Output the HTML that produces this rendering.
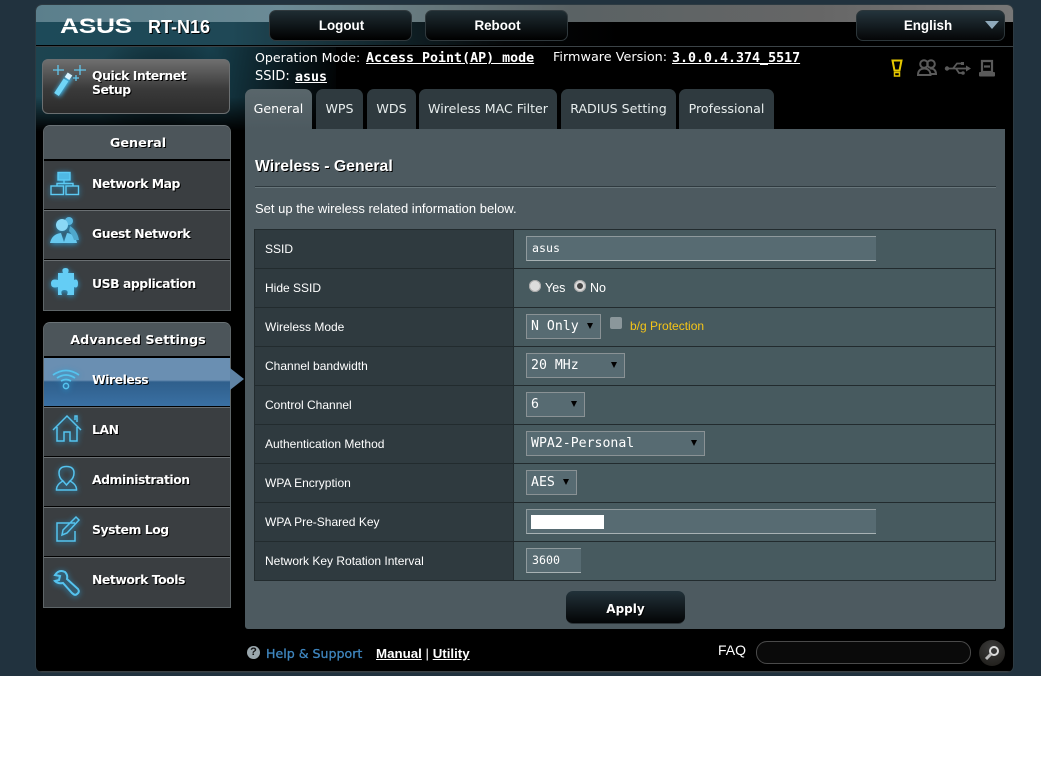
<!DOCTYPE html>
<html><head><meta charset="utf-8"><style>
html,body{margin:0;padding:0;background:#fff}
body{width:1041px;height:763px;position:relative;overflow:hidden;font-family:"Liberation Sans",sans-serif}
#bg{position:absolute;left:0;top:0;width:1041px;height:676px;background:#21323e}
#wrap{position:absolute;left:36px;top:5px;width:977px;height:667px;background:#000;border-radius:6px;overflow:hidden;box-shadow:0 0 0 1px #2c3a42}
#hdrtop{position:absolute;left:0;top:0;width:977px;height:17px;background:linear-gradient(90deg,#5b7f8c 0,#6b8b96 25%,#6a7f85 35%,#5a6264 55%,#666 80%,#777 100%)}
#hdrlow{position:absolute;left:0;top:17px;width:977px;height:24px;background:linear-gradient(90deg,#1d4a59 0,#1f4856 20%,#17323b 30%,#050708 48%,#000 60%)}
#cloud{position:absolute;left:0;top:41px;width:300px;height:85px;background:radial-gradient(ellipse 70px 60px at 125px 45px,#0a1d25 0,transparent 100%),linear-gradient(100deg,#1d4450 0,#17404d 55%,#0a1a20 80%,#000 100%);-webkit-mask-image:linear-gradient(180deg,#000 60%,transparent 100%);mask-image:linear-gradient(180deg,#000 60%,transparent 100%)}
.a{position:absolute;white-space:nowrap}
.d{font-family:"DejaVu Sans",sans-serif}
.m{font-family:"DejaVu Sans Mono",monospace}
.sh{color:#fff;font-weight:bold;font-size:12.4px;letter-spacing:-.45px;text-shadow:1px 1px 0 #000;font-family:"DejaVu Sans",sans-serif}
.btn{position:absolute;box-sizing:border-box;border-radius:7px;background:linear-gradient(180deg,#1f2d33 0,#000 100%);border:1px solid #30393d;color:#fff;font-weight:bold;font-size:13.4px;text-align:center}
.grp{position:absolute;box-sizing:border-box;left:43px;width:188px;border-radius:7px 7px 0 0;background:#3a3e41;border:1px solid #5e6568;border-top-color:#6a7276}
.gh{position:absolute;left:0;top:0;width:186px;height:33px;background:#4c555a;border-radius:6px 6px 0 0;border-bottom:2px solid #000;text-align:center;line-height:33px;box-sizing:content-box}
.sep{position:absolute;left:0;width:186px;height:1px;background:#000;border-bottom:1px solid #6a6f72}
.tab{position:absolute;top:89px;height:40px;box-sizing:border-box;background:#2f3a3f;border-radius:7px 7px 0 0;color:#e8eeee;font-size:12.6px;font-family:"DejaVu Sans",sans-serif;text-align:center;line-height:40px}
.tab.on{background:linear-gradient(180deg,#59666b 0,#4d5a60 100%);color:#fff}
#panel{position:absolute;left:245px;top:129px;width:760px;height:500px;background:#4d5a60;border-radius:0 0 3px 3px}
.th{position:absolute;left:255px;width:258px;height:38px;background:#2f3a3f}
.td{position:absolute;left:514px;width:481px;height:38px;background:#475a5f}
.lb{position:absolute;left:265px;color:#fff;font-size:12px;white-space:nowrap}
.inp{position:absolute;box-sizing:border-box;height:25px;background:#576b72;border-top:1px solid #8f9a9d;border-left:1px solid #8f9a9d;border-bottom:1px solid #a8b2b4;color:#fff;font-family:"DejaVu Sans Mono",monospace;font-size:11.6px;line-height:22px;padding-left:5px}
.sel{position:absolute;box-sizing:border-box;height:25px;background:#576b72;border:1px solid #8a9295;color:#fff;font-family:"DejaVu Sans Mono",monospace;font-size:13.2px;line-height:23px;padding-left:4px}
.sel i{position:absolute;top:8px;width:0;height:0;border-left:3.500px solid transparent;border-right:3.500px solid transparent;border-top:6px solid #000}
</style></head><body>
<div id="bg"></div>
<div id="wrap">
<div id="hdrtop"></div><div id="hdrlow"></div><div id="cloud"></div>
<div class="a" style="left:0;top:41px;width:977px;height:1px;background:#3b4347"></div>
<div class="a" style="left:0;top:40px;width:977px;height:1px;background:#000"></div>
<div class="a" style="left:0;bottom:0;width:977px;height:1px;background:#3a3f42"></div>
</div>

<div class="a" style="left:60px;top:15px;font-weight:bold;font-size:21px;line-height:24px;color:#fff;transform-origin:0 0;transform:scaleX(1.25);letter-spacing:-.2px">ASUS</div>
<div class="a" style="left:60px;top:26px;width:73px;height:1px;background:#1d4a59;opacity:.7"></div>
<div class="a" style="left:148px;top:17px;font-weight:bold;font-size:18px;color:#fff;text-shadow:1px 1px 0 #000">RT-N16</div>

<div class="btn" style="left:269px;top:10px;width:143px;height:31px;line-height:29px;padding-left:2px">Logout</div>
<div class="btn" style="left:425px;top:10px;width:143px;height:31px;line-height:29px;padding-left:2px">Reboot</div>
<div class="btn" style="left:856px;top:10px;width:149px;height:31px;line-height:29px;padding-right:5px;border-color:#2c363a;background:linear-gradient(180deg,#24343c 0,#050607 100%)">English</div>
<div class="a" style="left:985px;top:21px;width:0;height:0;border-left:7px solid transparent;border-right:7px solid transparent;border-top:8px solid #8fa9bb"></div>

<div class="a d" style="left:255px;top:50px;color:#fff;font-size:12.6px">Operation Mode:</div>
<div class="a m" style="left:366px;top:51px;color:#fff;font-size:13.3px;font-weight:bold;text-decoration:underline">Access Point(AP) mode</div>
<div class="a d" style="left:553px;top:50px;color:#fff;font-size:12.8px">Firmware Version:</div>
<div class="a m" style="left:672px;top:51px;color:#fff;font-size:13.3px;font-weight:bold;text-decoration:underline">3.0.0.4.374_5517</div>
<div class="a d" style="left:255px;top:69px;color:#fff;font-size:13px">SSID:</div>
<div class="a m" style="left:295px;top:70px;color:#fff;font-size:13.3px;font-weight:bold;text-decoration:underline">asus</div>

<svg class="a" style="left:885px;top:56px" width="112" height="24" viewBox="0 0 112 24" fill="none">
<path d="M7.500 4.500 H16.500 L14.500 14.500 H9.500Z" stroke="#e6c800" stroke-width="2"/><rect x="9.500" y="16.500" width="5" height="3.500" stroke="#e6c800" stroke-width="1.500"/>
<g stroke="#5a5a5a" stroke-width="2"><circle cx="39" cy="8" r="3.800"/><circle cx="46" cy="8" r="3.800"/><path d="M33 19 C33 13.500 37 12.500 39.500 12.500 C43 12.500 45.500 15 45.500 19Z"/><path d="M45 12.500 C49 12 51 15 51 18 L46 18"/></g>
<g stroke="#5a5a5a" stroke-width="1.800"><path d="M62 12.500 H82"/><path d="M68 12.500 L72 7.500 H76 M71 12.500 L74 17 H77"/></g><circle cx="62" cy="12.500" r="2.200" fill="#5a5a5a"/><path d="M81 9.500 L86 12.500 L81 15.500Z" fill="#5a5a5a"/><rect x="76" y="6" width="3" height="3" fill="#5a5a5a"/><circle cx="78" cy="17" r="1.800" fill="#5a5a5a"/>
<g stroke="#5a5a5a" stroke-width="2.200"><path d="M97 5 H107 V16 H97Z"/><path d="M99 10.500 H105"/></g><rect x="94" y="16" width="16" height="4.500" rx="1" fill="#5a5a5a"/>
</svg>

<!-- QIS -->
<div class="a" style="left:42px;top:59px;width:188px;height:55px;box-sizing:border-box;border:1px solid #6b6f71;border-radius:6px;background:linear-gradient(180deg,#6e6e6e 0,#3a3a3a 55%,#2b2b2b 100%)"></div>
<svg class="a" style="left:50px;top:62px;overflow:visible" width="40" height="40" viewBox="0 0 40 40">
<defs><filter id="gl" x="-60%" y="-60%" width="220%" height="220%"><feGaussianBlur stdDeviation="2"/></filter></defs>
<path d="M7 33 L20 14" stroke="#3fb5e8" stroke-width="7" filter="url(#gl)"/>
<path d="M6.500 32.500 L16 18" stroke="#70d5f7" stroke-width="5.500"/><path d="M17 16.500 L20 12" stroke="#d9f4ff" stroke-width="5.500"/>
<path d="M8 3 V13 M3 8 H14 M30 3 V13 M24 8 H36 M26 13 V19 M23 16 H29" stroke="#62c6ec" stroke-width="1.300"/>
</svg>
<div class="a sh" style="left:92px;top:69px;line-height:14px">Quick Internet<br>Setup</div>

<!-- General -->
<div class="grp" style="top:125px;height:186px"><div class="gh"><span class="sh" style="font-size:12.8px;letter-spacing:0;margin-left:2px">General</span></div>
<div class="sep" style="top:83px"></div><div class="sep" style="top:133px"></div></div>
<div class="a sh" style="left:92px;top:176px">Network Map</div>
<div class="a sh" style="left:92px;top:226px">Guest Network</div>
<div class="a sh" style="left:92px;top:276px">USB application</div>
<svg class="a" style="left:48px;top:168px;overflow:visible;filter:drop-shadow(0 1px 3px #2a9ad0)" width="36" height="130" viewBox="0 0 36 130">
<g fill="none" stroke="#5ccbf4" stroke-width="1.400"><rect x="10" y="4.500" width="12" height="7.500" fill="#4fb9e4"/><path d="M16 12 V15 M9 18 V15.500 H25 V18"/><rect x="3" y="18" width="12.500" height="8.500"/><rect x="18" y="18" width="12.500" height="8.500"/></g>
<circle cx="21" cy="53" r="4" fill="#5ab8e0"/><circle cx="14" cy="57" r="6" fill="#8ad8f6"/><path d="M2 75 Q4 66 13 65 L16 74 L19 65 Q27 66 29 75Z" fill="#67c8ee"/><path d="M22 58 Q29 62 31 72 L26 72 Q24 66 21 63Z" fill="#4fa8cc"/>
<path d="M10 105 H15 Q13 100 17.500 100 Q22 100 20 105 H26 V112 Q30 110 30 115.500 Q30 121 26 119 V127 H19 Q21 122 16.500 122 Q12 122 14 127 H10 V119 Q3 121 3 115.500 Q3 110 10 112Z" fill="#64cdf5"/>
</svg>

<!-- Advanced -->
<div class="grp" style="top:322px;height:286px"><div class="gh"><span class="sh" style="font-size:12.8px;letter-spacing:0;margin-left:2px">Advanced Settings</span></div></div>
<div class="a" style="left:44px;top:358px;width:186px;height:48px;background:linear-gradient(180deg,#6a8fb2 0,#6a8fb2 46%,#2f5f8c 50%,#3a70a3 100%);border-bottom:2px solid #000"></div>
<div class="a" style="left:230px;top:368px;width:0;height:0;border-top:11px solid transparent;border-bottom:11px solid transparent;border-left:14px solid #5f83a5"></div>
<div class="a" style="left:44px;top:406px;width:186px;height:1px;background:#000;border-bottom:1px solid #6a6f72"></div>
<div class="a" style="left:44px;top:456px;width:186px;height:1px;background:#000;border-bottom:1px solid #6a6f72"></div>
<div class="a" style="left:44px;top:506px;width:186px;height:1px;background:#000;border-bottom:1px solid #6a6f72"></div>
<div class="a" style="left:44px;top:556px;width:186px;height:1px;background:#000;border-bottom:1px solid #6a6f72"></div>
<div class="a sh" style="left:92px;top:372px">Wireless</div>
<div class="a sh" style="left:92px;top:422px">LAN</div>
<div class="a sh" style="left:92px;top:472px">Administration</div>
<div class="a sh" style="left:92px;top:522px">System Log</div>
<div class="a sh" style="left:92px;top:572px">Network Tools</div>
<svg class="a" style="left:50px;top:365px;overflow:visible;filter:drop-shadow(0 1px 3px #2a9ad0)" width="34" height="240" viewBox="0 0 34 240" fill="none" stroke="#55c3ee" stroke-width="1.500">
<path d="M3 10 Q16 1 29 10 M7 13 Q16 7 25 13 M11 16 Q16 13 21 16" stroke-width="1.700"/><circle cx="16" cy="21" r="2.600"/>
<path d="M3 65 L17 51 L31 65 M7 62 V76 H14 V67 H20 V76 H27 V62 M25 55 V51 H27 V57"/>
<path d="M6.500 124 Q7 119 13 116 Q9 113 9 108 Q9 101.500 16.500 101.500 Q24 101.500 24 108 Q24 113 20 116 Q26 119 26.500 124 V125 H6.500Z M13 116 L16.500 120 L20 116"/>
<path d="M25 158 H7 V176 H25 V166 M12 170 L13 165 L26 152 L29 155 L17 168Z"/>
<path d="M5 210 Q9 204 15 207 Q18 210 17 214 L28 224 Q30 227 27 229 Q25 231 22 228 L13 218 Q8 219 5 216 L9 215 L10 211Z" stroke-width="2"/>
</svg>

<!-- Tabs -->
<div class="tab on" style="left:245px;width:67px">General</div>
<div class="tab" style="left:316px;width:47px">WPS</div>
<div class="tab" style="left:367px;width:49px">WDS</div>
<div class="tab" style="left:419px;width:138px">Wireless MAC Filter</div>
<div class="tab" style="left:561px;width:115px">RADIUS Setting</div>
<div class="tab" style="left:679px;width:95px">Professional</div>

<div id="panel"></div>
<div class="a" style="left:255px;top:158px;color:#fff;font-weight:bold;font-size:15.8px;text-shadow:1px 1px 0 #000">Wireless - General</div>
<div class="a" style="left:255px;top:186px;width:741px;height:1px;background:#2f3a3f;border-bottom:1px solid #68767b"></div>
<div class="a" style="left:255px;top:201px;color:#fff;font-size:13px">Set up the wireless related information below.</div>

<!-- Table -->
<div class="a" style="left:254px;top:229px;width:742px;height:352px;background:#222b2e"></div>
<div class="th" style="top:230px"></div><div class="td" style="top:230px"></div>
<div class="th" style="top:269px"></div><div class="td" style="top:269px"></div>
<div class="th" style="top:308px"></div><div class="td" style="top:308px"></div>
<div class="th" style="top:347px"></div><div class="td" style="top:347px"></div>
<div class="th" style="top:386px"></div><div class="td" style="top:386px"></div>
<div class="th" style="top:425px"></div><div class="td" style="top:425px"></div>
<div class="th" style="top:464px"></div><div class="td" style="top:464px"></div>
<div class="th" style="top:503px"></div><div class="td" style="top:503px"></div>
<div class="th" style="top:542px"></div><div class="td" style="top:542px"></div>
<div class="lb" style="top:242px">SSID</div>
<div class="lb" style="top:281px">Hide SSID</div>
<div class="lb" style="top:320px">Wireless Mode</div>
<div class="lb" style="top:359px">Channel bandwidth</div>
<div class="lb" style="top:398px">Control Channel</div>
<div class="lb" style="top:437px">Authentication Method</div>
<div class="lb" style="top:476px">WPA Encryption</div>
<div class="lb" style="top:515px">WPA Pre-Shared Key</div>
<div class="lb" style="top:554px">Network Key Rotation Interval</div>

<div class="inp" style="left:526px;top:236px;width:350px">asus</div>
<div class="a" style="left:529px;top:280px;width:12px;height:12px;border-radius:50%;background:#dcdcdc;box-shadow:inset 0 0 0 1px #aaa"></div>
<div class="a" style="left:545px;top:281px;color:#fff;font-size:12.5px">Yes</div>
<div class="a" style="left:574px;top:280px;width:12px;height:12px;border-radius:50%;background:#dcdcdc;box-shadow:inset 0 0 0 1px #aaa"></div>
<div class="a" style="left:577px;top:283px;width:6px;height:6px;border-radius:50%;background:#444"></div>
<div class="a" style="left:590px;top:281px;color:#fff;font-size:12.5px">No</div>
<div class="sel" style="left:526px;top:314px;width:75px">N Only<i style="left:60px"></i></div>
<div class="a" style="left:610px;top:317px;width:12px;height:12px;background:#8b979b;border-radius:2px"></div>
<div class="a" style="left:630px;top:319px;color:#f5c518;font-size:12px">b/g Protection</div>
<div class="sel" style="left:526px;top:353px;width:99px">20 MHz<i style="left:84px"></i></div>
<div class="sel" style="left:526px;top:392px;width:59px">6<i style="left:44px"></i></div>
<div class="sel" style="left:526px;top:431px;width:179px">WPA2-Personal<i style="left:164px"></i></div>
<div class="sel" style="left:526px;top:470px;width:51px">AES<i style="left:36px"></i></div>
<div class="inp" style="left:526px;top:509px;width:350px"></div>
<div class="a" style="left:531px;top:515px;width:73px;height:14px;background:#fff"></div>
<div class="inp" style="left:526px;top:548px;width:55px">3600</div>

<div class="btn" style="left:566px;top:591px;width:119px;height:33px;line-height:36px;font-size:12px;font-family:'DejaVu Sans',sans-serif;background:linear-gradient(180deg,#22323a 0,#030405 100%);border:0;border-bottom:1px solid #2c3438;text-shadow:1px 1px 0 #000">Apply</div>

<!-- Footer -->
<div class="a" style="left:247px;top:646px;width:13px;height:13px;border-radius:50%;background:#9aa7ad;color:#111;font-size:11px;font-weight:bold;text-align:center;line-height:13px">?</div>
<div class="a d" style="left:266px;top:646px;color:#3f86bf;font-size:12.6px;-webkit-text-stroke:.3px #3f86bf">Help &amp; Support</div>
<div class="a" style="left:376px;top:646px;color:#fff;font-size:13.3px;font-weight:bold"><u>Manual</u> <span style="font-weight:normal">|</span> <u>Utility</u></div>
<div class="a" style="left:718px;top:642px;color:#fff;font-size:14px">FAQ</div>
<div class="a" style="left:756px;top:641px;width:215px;height:23px;box-sizing:border-box;border:1px solid #4a4a4a;border-radius:11px;background:#0a0a0a"></div>
<div class="a" style="left:979px;top:640px;width:26px;height:26px;border-radius:50%;background:radial-gradient(circle at 50% 30%,#3c3c3c,#1c1a16)"></div>
<svg class="a" style="left:979px;top:640px" width="26" height="26" viewBox="0 0 26 26" fill="none"><circle cx="15" cy="11" r="4" stroke="#ddd" stroke-width="2"/><path d="M12 14 L7 19" stroke="#bbb" stroke-width="3"/></svg>
</body></html>
